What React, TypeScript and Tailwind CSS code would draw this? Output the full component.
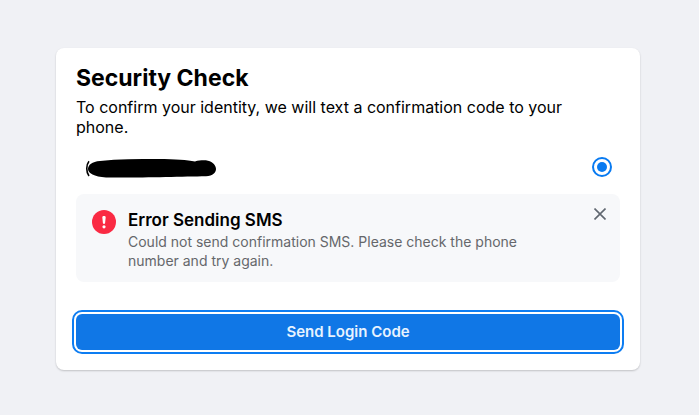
import { useState } from 'react';

export default function App() {
    const [selected, setSelected] = useState(true);
    const [showError, setShowError] = useState(true);

    return (
        <main className="min-h-screen bg-[#f0f1f5] py-12 pr-[59px] pl-14 font-['Inter',sans-serif] text-black">
            <form
                onSubmit={(e) => e.preventDefault()}
                className="rounded-lg bg-white px-5 pt-4 pb-5 shadow-[0_1px_2px_rgba(0,0,0,0.2)]"
            >
                <h1 className="text-[23px] leading-7 font-bold">Security Check</h1>
                <p className="mt-[5px] max-w-[520px] text-base leading-5">
                    To confirm your identity, we will text a confirmation code to your phone.
                </p>

                {/* Phone option */}
                <label className="mt-5 mb-[17px] flex items-center justify-between px-2">
                    <svg viewBox="0 0 132 20" className="h-5 w-[132px] overflow-visible" role="img" aria-label="Phone number">
                        <path d="M5 4.2C2 8 2 15 5 19" fill="none" stroke="#000" strokeWidth="1.6" />
                        <path d="M16 4C34 2 54 2 74 2C92 2 103 3 111 4.4C116 3.1 121 3.1 124 3.7C129 5 132 8.5 132 12C132 15.5 129 18.8 122 19.2C96 19.6 48 21 22 20.4C10 20 4 16 4 12C4 8 8 4.6 16 4Z" />
                    </svg>
                    <input
                        type="radio"
                        name="phone"
                        checked={selected}
                        onChange={() => setSelected(true)}
                        className="size-5 appearance-none rounded-full border-2 border-[#087af1] bg-white p-[3px] checked:bg-[#087af1] checked:bg-clip-content"
                    />
                </label>

                {/* Error notice */}
                {showError && (
                    <div role="alert" className="flex items-start gap-3 rounded-lg bg-[#f7f8fa] pt-3.5 pr-3.5 pb-3 pl-4">
                        <svg viewBox="0 0 24 24" className="mt-0.5 size-6 shrink-0">
                            <circle cx="12" cy="12" r="12" fill="#fa2a43" />
                            <path d="M10.3 7.2C10.2 5.6 13.8 5.6 13.7 7.2L13.1 13C13 14.2 11 14.2 10.9 13Z" fill="#fff" />
                            <circle cx="12" cy="16.8" r="1.6" fill="#fff" />
                        </svg>
                        <div className="mt-0.5 flex-1">
                            <h2 className="text-[17px] leading-5 font-semibold">Error Sending SMS</h2>
                            <p className="mt-0.5 max-w-[420px] text-sm leading-[19px] text-[#65676b]">
                                Could not send confirmation SMS. Please check the phone number and try again.
                            </p>
                        </div>
                        <button type="button" aria-label="Close" onClick={() => setShowError(false)}>
                            <svg viewBox="0 0 12 12" className="size-3" stroke="#606770" strokeWidth="1.6">
                                <path d="M0.5 0.5L11.5 11.5M11.5 0.5L0.5 11.5" />
                            </svg>
                        </button>
                    </div>
                )}

                <button
                    type="submit"
                    className="mt-8 h-9 w-full rounded-md bg-[#1077e6] text-[15px] font-semibold text-[#e7f3ff] outline-2 outline-offset-2 outline-[#0d7df2]"
                >
                    Send Login Code
                </button>
            </form>
        </main>
    );
}
